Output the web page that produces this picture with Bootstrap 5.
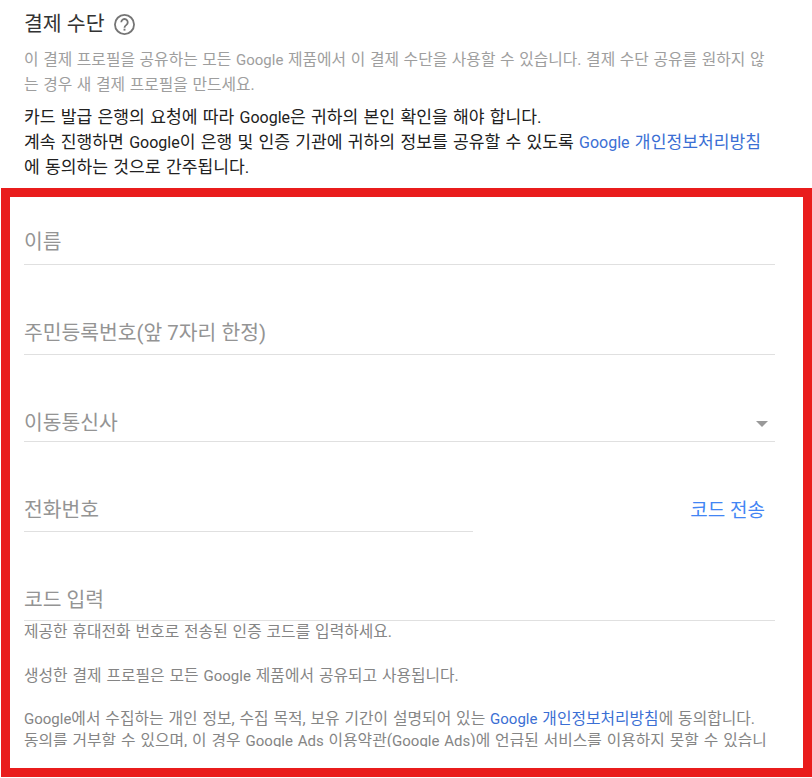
<!DOCTYPE html>
<html lang="ko">
<head>
<meta charset="utf-8">
<title>결제 수단</title>
<link href="https://cdn.jsdelivr.net/npm/bootstrap@5.3.0/dist/css/bootstrap.min.css" rel="stylesheet">
<style>
html, body { height: 778px; overflow: hidden; }
body { font-family: Roboto, "Noto Sans CJK KR", sans-serif; background: #fff; color: #212121; }
.pay-head { padding: 11px 37px 0 24px; }
.pay-title { font-size: 20.5px; line-height: 26px; font-weight: 400; color: #333; margin: 0; }
.pay-help { width: 21px; height: 21px; margin-left: 9px; }
.pay-desc { font-size: 15.8px; word-spacing: .7px; line-height: 25px; color: #9e9e9e; margin: 10px 0 0; }
.pay-notice { font-size: 17.15px; word-spacing: 1px; line-height: 25px; color: #212121; margin: 8px -8px 0 0; }
.pay-lat { font-size: 15px; line-height: 1; }
.pay-notice .pay-lat { font-size: 16px; }
.pay-link { color: #3b6fd4; text-decoration: none; }
.pay-box { height: 589px; margin: 8px 0 0 1px; border: 9px solid #e91c1c; overflow: hidden; }
.pay-form { padding: 0 28px 0 14px; height: 550px; overflow: hidden; }
.pay-field { border-bottom: 1px solid #e0e0e0; font-size: 20.4px; line-height: 26px; color: #949494; display: flex; align-items: flex-end; justify-content: space-between; }
.f1 { height: 68px; padding-bottom: 9px; }
.f2 { height: 90px; padding-bottom: 8px; }
.f3 { height: 87px; padding-bottom: 5px; }
.f4 { height: 90px; padding-bottom: 8px; }
.f5 { height: 89px; padding-bottom: 7px; }
.pay-phone { width: 449px; flex: none; }
.pay-send { font-size: 19px; line-height: 26px; color: #4285f4; text-decoration: none; margin-right: 10px; padding-bottom: 8px; }
.pay-caret { width: 0; height: 0; border-left: 6px solid transparent; border-right: 6px solid transparent; border-top: 6px solid #999; margin: 0 7px 9px 0; }
.pay-small { font-size: 15.8px; word-spacing: 1px; line-height: 22px; color: #858585; margin: 0; }
.s2 { margin-top: 22px; }
.s3 { margin-top: 21px; }
</style>
</head>
<body>
<div class="pay-head">
  <h2 class="pay-title d-flex align-items-center">결제 수단
    <svg class="pay-help" viewBox="1 1 22 22" fill="none" aria-hidden="true">
      <circle cx="12" cy="12" r="10" stroke="#757575" stroke-width="1.9"/>
      <path d="M8.6 9.6a3.4 3.4 0 1 1 5.4 2.8c-1.2.9-2 1.5-2 3" stroke="#757575" stroke-width="1.9"/>
      <rect x="11" y="16.4" width="2" height="2" fill="#757575"/>
    </svg>
  </h2>
  <p class="pay-desc">이 결제 프로필을 공유하는 모든 <span class="pay-lat">Google</span> 제품에서 이 결제 수단을 사용할 수 있습니다. 결제 수단 공유를 원하지 않는 경우 새 결제 프로필을 만드세요.</p>
  <p class="pay-notice">카드 발급 은행의 요청에 따라 <span class="pay-lat">Google</span>은 귀하의 본인 확인을 해야 합니다.<br>계속 진행하면 <span class="pay-lat">Google</span>이 은행 및 인증 기관에 귀하의 정보를 공유할 수 있도록 <a class="pay-link" href="#"><span class="pay-lat">Google</span> 개인정보처리방침</a><br>에 동의하는 것으로 간주됩니다.</p>
</div>
<div class="pay-box">
  <div class="pay-form">
    <div class="pay-field f1">이름</div>
    <div class="pay-field f2">주민등록번호(앞 7자리 한정)</div>
    <div class="pay-field f3">이동통신사<span class="pay-caret"></span></div>
    <div class="d-flex justify-content-between align-items-end">
      <div class="pay-field f4 pay-phone">전화번호</div>
      <a class="pay-send" href="#">코드 전송</a>
    </div>
    <div class="pay-field f5">코드 입력</div>
    <p class="pay-small">제공한 휴대전화 번호로 전송된 인증 코드를 입력하세요.</p>
    <p class="pay-small s2">생성한 결제 프로필은 모든 <span class="pay-lat">Google</span> 제품에서 공유되고 사용됩니다.</p>
    <p class="pay-small s3"><span class="pay-lat">Google</span>에서 수집하는 개인 정보, 수집 목적, 보유 기간이 설명되어 있는 <a class="pay-link" href="#"><span class="pay-lat">Google</span> 개인정보처리방침</a>에 동의합니다.<br>동의를 거부할 수 있으며, 이 경우 <span class="pay-lat">Google Ads</span> 이용약관(<span class="pay-lat">Google Ads</span>)에 언급된 서비스를 이용하지 못할 수 있습니다.</p>
  </div>
</div>
<script src="https://cdn.jsdelivr.net/npm/bootstrap@5.3.0/dist/js/bootstrap.bundle.min.js"></script>
</body>
</html>
